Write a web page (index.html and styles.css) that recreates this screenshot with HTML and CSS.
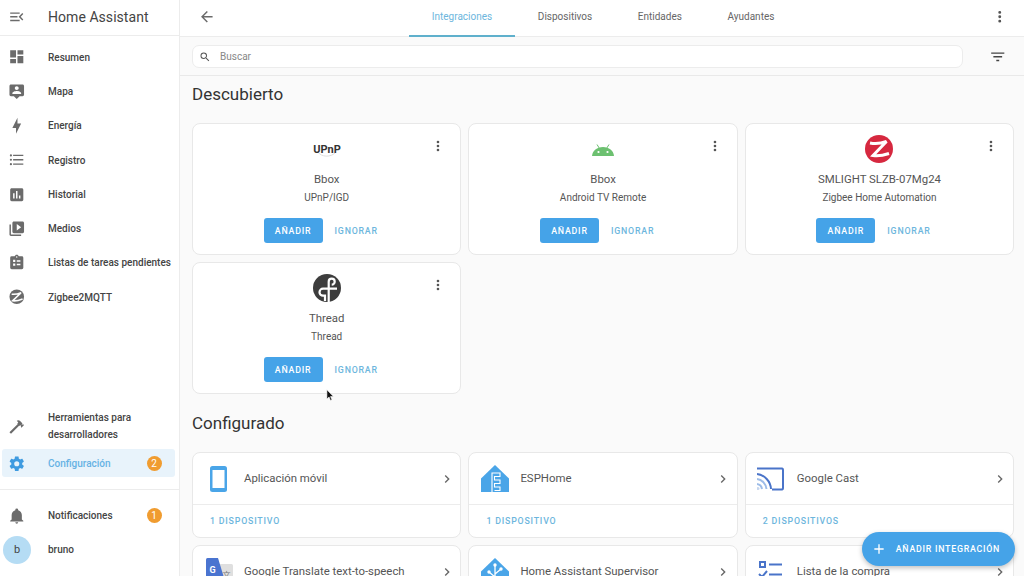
FILE: index.html
```html
<!DOCTYPE html>
<html>

<head>
    <meta charset="utf-8" />
    <meta name="viewport" content="width=device-width, initial-scale=1.0" />
    <title>Integraciones</title>
    <link rel="stylesheet" href="styles.css">
</head>

<body>
    <svg class="sprite" aria-hidden="true">
        <symbol id="i-dots" viewBox="0 0 24 24"><path d="M12,16A2,2 0 0,1 14,18A2,2 0 0,1 12,20A2,2 0 0,1 10,18A2,2 0 0,1 12,16M12,10A2,2 0 0,1 14,12A2,2 0 0,1 12,14A2,2 0 0,1 10,12A2,2 0 0,1 12,10M12,4A2,2 0 0,1 14,6A2,2 0 0,1 12,8A2,2 0 0,1 10,6A2,2 0 0,1 12,4Z"/></symbol>
        <symbol id="i-chevron" viewBox="0 0 24 24"><path d="M8.59,16.58L13.17,12L8.59,7.41L10,6L16,12L10,18L8.59,16.58Z"/></symbol>
    </svg>

    <div class="app">
        <aside class="sidebar">
            <div class="side-head">
                <svg class="icon" viewBox="0 0 24 24"><path d="M21,15.61L19.59,17L14.58,12L19.59,7L21,8.39L17.44,12L21,15.61M3,6H16V8H3V6M3,13V11H13V13H3M3,18V16H16V18H3Z"/></svg>
                <span class="side-title">Home Assistant</span>
            </div>
            <nav class="side-list">
                <a class="side-item"><svg class="icon" viewBox="0 0 24 24"><path d="M13,3V9H21V3M13,21H21V11H13M3,21H11V15H3M3,13H11V3H3V13Z"/></svg><span>Resumen</span></a>
                <a class="side-item"><svg class="icon" viewBox="0 0 24 24"><path d="M20 2H4C2.9 2 2 2.9 2 4V16C2 17.1 2.9 18 4 18H8L12 22L16 18H20C21.1 18 22 17.1 22 16V4C22 2.9 21.1 2 20 2M12 4.3C13.5 4.3 14.7 5.5 14.7 7S13.5 9.7 12 9.7 9.3 8.5 9.3 7 10.5 4.3 12 4.3M18 15H6V14.1C6 12.1 10 11 12 11S18 12.1 18 14.1V15Z"/></svg><span>Mapa</span></a>
                <a class="side-item"><svg class="icon" viewBox="0 0 24 24"><path d="M11 15H6L13 1V9H18L11 23V15Z"/></svg><span>Energía</span></a>
                <a class="side-item"><svg class="icon" viewBox="0 0 24 24"><path d="M7,5H21V7H7V5M7,13V11H21V13H7M4,4.5A1.5,1.5 0 0,1 5.5,6A1.5,1.5 0 0,1 4,7.5A1.5,1.5 0 0,1 2.5,6A1.5,1.5 0 0,1 4,4.5M4,10.5A1.5,1.5 0 0,1 5.5,12A1.5,1.5 0 0,1 4,13.5A1.5,1.5 0 0,1 2.5,12A1.5,1.5 0 0,1 4,10.5M7,19V17H21V19H7M4,16.5A1.5,1.5 0 0,1 5.5,18A1.5,1.5 0 0,1 4,19.5A1.5,1.5 0 0,1 2.5,18A1.5,1.5 0 0,1 4,16.5Z"/></svg><span>Registro</span></a>
                <a class="side-item"><svg class="icon" viewBox="0 0 24 24"><path d="M19 3H5C3.9 3 3 3.9 3 5V19C3 20.1 3.9 21 5 21H19C20.1 21 21 20.1 21 19V5C21 3.9 20.1 3 19 3M9 17H7V10H9V17M13 17H11V7H13V17M17 17H15V13H17V17Z"/></svg><span>Historial</span></a>
                <a class="side-item"><svg class="icon" viewBox="0 0 24 24"><path d="M4 6H2V20C2 21.1 2.9 22 4 22H18V20H4V6M20 2H8C6.9 2 6 2.9 6 4V16C6 17.1 6.9 18 8 18H20C21.1 18 22 17.1 22 16V4C22 2.9 21.1 2 20 2M12 14.5V5.5L18 10L12 14.5Z"/></svg><span>Medios</span></a>
                <a class="side-item"><svg class="icon" viewBox="0 0 24 24"><path fill-rule="evenodd" d="M19,3H14.82C14.4,1.84 13.3,1 12,1C10.7,1 9.6,1.84 9.18,3H5A2,2 0 0,0 3,5V19A2,2 0 0,0 5,21H19A2,2 0 0,0 21,19V5A2,2 0 0,0 19,3M12,3A1,1 0 0,1 13,4A1,1 0 0,1 12,5A1,1 0 0,1 11,4A1,1 0 0,1 12,3M7,8H10V11H7ZM12,8.5H17V10.5H12ZM7,13H10V16H7ZM12,13.5H17V15.5H12Z"/></svg><span>Listas de tareas pendientes</span></a>
                <a class="side-item"><svg class="icon" viewBox="0 0 24 24"><circle cx="12" cy="12" r="10"/><path class="zig-cut" d="M5 8.5C9 9 13 8.500 18 6.500L6.500 17.500C11 18 15 17 20 15"/></svg><span>Zigbee2MQTT</span></a>
            </nav>
            <div class="side-bottom">
                <a class="side-item side-item-tall"><svg class="icon" viewBox="0 0 24 24"><path d="M2 19.63L13.43 8.2L12.72 7.5L14.14 6.07L12 3.89C13.2 2.7 15.09 2.7 16.27 3.89L19.87 7.5L18.45 8.91H21.29L22 9.62L18.45 13.21L17.74 12.5V9.62L16.27 11.04L15.56 10.33L4.13 21.76L2 19.63Z"/></svg><span>Herramientas para desarrolladores</span></a>
                <a class="side-item side-item-active"><svg class="icon" viewBox="0 0 24 24"><path d="M12,15.5A3.5,3.5 0 0,1 8.5,12A3.5,3.5 0 0,1 12,8.5A3.5,3.5 0 0,1 15.5,12A3.5,3.5 0 0,1 12,15.5M19.43,12.97C19.47,12.65 19.5,12.33 19.5,12C19.5,11.67 19.47,11.34 19.43,11L21.54,9.37C21.73,9.22 21.78,8.95 21.66,8.73L19.66,5.27C19.54,5.05 19.27,4.96 19.05,5.05L16.56,6.05C16.04,5.66 15.5,5.32 14.87,5.07L14.5,2.42C14.46,2.18 14.25,2 14,2H10C9.75,2 9.54,2.18 9.5,2.42L9.13,5.07C8.5,5.32 7.96,5.66 7.44,6.05L4.95,5.05C4.73,4.96 4.46,5.05 4.34,5.27L2.34,8.73C2.21,8.95 2.27,9.22 2.46,9.37L4.57,11C4.53,11.34 4.5,11.67 4.5,12C4.5,12.33 4.53,12.65 4.57,12.97L2.46,14.63C2.27,14.78 2.21,15.05 2.34,15.27L4.34,18.73C4.46,18.95 4.73,19.03 4.95,18.95L7.44,17.94C7.96,18.34 8.5,18.68 9.13,18.93L9.5,21.58C9.54,21.82 9.75,22 10,22H14C14.25,22 14.46,21.82 14.5,21.58L14.87,18.93C15.5,18.67 16.04,18.34 16.56,17.94L19.05,18.95C19.27,19.03 19.54,18.95 19.66,18.73L21.66,15.27C21.78,15.05 21.73,14.78 21.54,14.63L19.43,12.97Z"/></svg><span>Configuración</span><b class="badge">2</b></a>
            </div>
            <div class="side-footer">
                <a class="side-item"><svg class="icon" viewBox="0 0 24 24"><path d="M21,19V20H3V19L5,17V11C5,7.9 7.03,5.17 10,4.29C10,4.19 10,4.1 10,4A2,2 0 0,1 12,2A2,2 0 0,1 14,4C14,4.1 14,4.19 14,4.29C16.97,5.17 19,7.9 19,11V17L21,19M14,21A2,2 0 0,1 12,23A2,2 0 0,1 10,21"/></svg><span>Notificaciones</span><b class="badge">1</b></a>
                <a class="side-item side-user"><i class="avatar">b</i><span>bruno</span></a>
            </div>
        </aside>

        <main class="main">
            <header class="topbar">
                <svg class="icon back" viewBox="0 0 24 24"><path d="M20,11V13H8L13.5,18.5L12.08,19.92L4.16,12L12.08,4.08L13.5,5.5L8,11H20Z"/></svg>
                <div class="tabs">
                    <a class="tab tab-active">Integraciones</a>
                    <a class="tab">Dispositivos</a>
                    <a class="tab">Entidades</a>
                    <a class="tab">Ayudantes</a>
                </div>
                <svg class="icon more"><use href="#i-dots"/></svg>
            </header>

            <div class="searchbar">
                <div class="search">
                    <svg class="search-icon" viewBox="0 0 24 24"><path d="M9.5,3A6.5,6.5 0 0,1 16,9.5C16,11.11 15.41,12.59 14.44,13.73L14.71,14H15.5L20.5,19L19,20.5L14,15.5V14.71L13.73,14.44C12.59,15.41 11.11,16 9.5,16A6.5,6.5 0 0,1 3,9.5A6.5,6.5 0 0,1 9.5,3M9.5,5C7,5 5,7 5,9.5C5,12 7,14 9.5,14C12,14 14,12 14,9.5C14,7 12,5 9.5,5Z"/></svg>
                    <span>Buscar</span>
                </div>
                <svg class="icon filter" viewBox="0 0 24 24"><path d="M6,13H18V11H6M3,6V8H21V6M10,18H14V16H10V18Z"/></svg>
            </div>

            <section class="content">
                <h2 class="section-title">Descubierto</h2>
                <div class="grid">
                    <div class="card disc">
                        <svg class="card-more"><use href="#i-dots"/></svg>
                        <div class="logo">
                            <svg class="logo-img" viewBox="0 0 28 28"><path fill="none" stroke="#d5d5d5" stroke-width="0.800" d="M5 17C8 22 18 23 23 17"/><text x="14" y="18" class="upnp">UPnP</text></svg>
                        </div>
                        <div class="disc-name">Bbox</div>
                        <div class="disc-sub">UPnP/IGD</div>
                        <div class="actions"><a class="btn">AÑADIR</a><a class="btn-text">IGNORAR</a></div>
                    </div>
                    <div class="card disc">
                        <svg class="card-more"><use href="#i-dots"/></svg>
                        <div class="logo">
                            <svg class="logo-img" viewBox="0 0 28 28"><path fill="#6cc070" d="M3 21C3.5 15.5 8 12 14 12S24.5 15.5 25 21Z"/><path stroke="#6cc070" stroke-width="1" d="M8 9.5L10.5 13.5M20 9.5L17.5 13.5"/><circle cx="9.5" cy="17" r="1.1" fill="#fff"/><circle cx="18.5" cy="17" r="1.1" fill="#fff"/></svg>
                        </div>
                        <div class="disc-name">Bbox</div>
                        <div class="disc-sub">Android TV Remote</div>
                        <div class="actions"><a class="btn">AÑADIR</a><a class="btn-text">IGNORAR</a></div>
                    </div>
                    <div class="card disc">
                        <svg class="card-more"><use href="#i-dots"/></svg>
                        <div class="logo">
                            <svg class="logo-img" viewBox="0 0 28 28"><circle cx="14" cy="14" r="14" fill="#d6283f"/><path fill="none" stroke="#fff" stroke-width="3" d="M5 8C10 9 16 8.500 21.500 6.500L8 20.500C13 21.500 18 20.500 24 18.500"/></svg>
                        </div>
                        <div class="disc-name">SMLIGHT SLZB-07Mg24</div>
                        <div class="disc-sub">Zigbee Home Automation</div>
                        <div class="actions"><a class="btn">AÑADIR</a><a class="btn-text">IGNORAR</a></div>
                    </div>
                    <div class="card disc">
                        <svg class="card-more"><use href="#i-dots"/></svg>
                        <div class="logo">
                            <svg class="logo-img" viewBox="0 0 28 28"><circle cx="14" cy="14" r="14" fill="#3d3d3d"/><path fill="none" stroke="#fff" stroke-width="2.200" d="M15.700 28V7.700A3 3 0 1 1 18.700 10.700"/><path fill="none" stroke="#fff" stroke-width="2.200" d="M24 14.700H10A3.500 3.500 0 0 0 10 21.700H12V27"/></svg>
                        </div>
                        <div class="disc-name">Thread</div>
                        <div class="disc-sub">Thread</div>
                        <div class="actions"><a class="btn">AÑADIR</a><a class="btn-text">IGNORAR</a></div>
                    </div>
                </div>

                <h2 class="section-title section-title-2">Configurado</h2>
                <div class="grid">
                    <div class="card conf">
                        <div class="conf-row">
                            <svg class="conf-logo" viewBox="0 0 30 30"><rect x="6" y="2" width="17" height="26" rx="2.5" fill="#4aa5e8"/><rect x="8.5" y="6" width="12" height="18" fill="#fff"/></svg>
                            <span>Aplicación móvil</span>
                            <svg class="chev"><use href="#i-chevron"/></svg>
                        </div>
                        <div class="conf-foot">1 DISPOSITIVO</div>
                    </div>
                    <div class="card conf">
                        <div class="conf-row">
                            <svg class="conf-logo" viewBox="0 0 30 30"><path fill="#4aa5e8" d="M15 1L29 14.5V28H1V14.5Z"/><path fill="none" stroke="#fff" stroke-width="1.1" d="M12 28V9H20V12.5H14.5V16H20V19.5H14.5V23H20V26.5H14.5"/></svg>
                            <span>ESPHome</span>
                            <svg class="chev"><use href="#i-chevron"/></svg>
                        </div>
                        <div class="conf-foot">1 DISPOSITIVO</div>
                    </div>
                    <div class="card conf">
                        <div class="conf-row">
                            <svg class="conf-logo" viewBox="2 0 30 30"><path fill="none" stroke="#4a74c9" stroke-width="2" d="M3 5.500V4.500H27A1.500 1.500 0 0 1 28 6V24A1.500 1.500 0 0 1 27 25.500H17"/><path fill="none" stroke="#4a74c9" stroke-width="2" d="M2 10A16 16 0 0 1 16 25"/><path fill="none" stroke="#9dbce8" stroke-width="2" d="M2 15A11 11 0 0 1 11.500 25M2 20A6 6 0 0 1 7 25"/><circle cx="3" cy="24.500" r="1.500" fill="#c6d6ef"/></svg>
                            <span>Google Cast</span>
                            <svg class="chev"><use href="#i-chevron"/></svg>
                        </div>
                        <div class="conf-foot">2 DISPOSITIVOS</div>
                    </div>
                    <div class="card conf">
                        <div class="conf-row">
                            <svg class="conf-logo" viewBox="0 0 30 30"><rect x="12" y="7" width="17" height="22" rx="1.500" fill="#dfdfdf"/><path fill="#4a74d0" d="M2 2.500A1.500 1.500 0 0 1 3.500 1H14L21 24H3.500A1.500 1.500 0 0 1 2 22.500Z"/><text x="5.500" y="16" class="g-mark">G</text><text x="18.500" y="21" class="g-mark g-mark-dark">文</text></svg>
                            <span>Google Translate text-to-speech</span>
                            <svg class="chev"><use href="#i-chevron"/></svg>
                        </div>
                    </div>
                    <div class="card conf">
                        <div class="conf-row">
                            <svg class="conf-logo" viewBox="0 0 30 30"><path fill="#4aa5e8" d="M15 1L29 14.5V28H1V14.5Z"/><path fill="none" stroke="#fff" stroke-width="1.300" d="M15 28V8M15 20L9 15M15 17L21 12"/><circle cx="15" cy="8" r="1.700" fill="#fff"/><circle cx="9" cy="15" r="1.700" fill="#fff"/><circle cx="21" cy="12" r="1.700" fill="#fff"/></svg>
                            <span>Home Assistant Supervisor</span>
                            <svg class="chev"><use href="#i-chevron"/></svg>
                        </div>
                    </div>
                    <div class="card conf">
                        <div class="conf-row">
                            <svg class="conf-logo" viewBox="2 0 30 30"><path fill="none" stroke="#4a74c9" stroke-width="2" d="M5 5H10V10H5ZM14 7.500H27M14 17.500H27M4 17L7 20L12 14"/></svg>
                            <span>Lista de la compra</span>
                            <svg class="chev"><use href="#i-chevron"/></svg>
                        </div>
                    </div>
                </div>
            </section>

            <a class="fab">
                <svg viewBox="0 0 24 24"><path d="M19,13H13V19H11V13H5V11H11V5H13V11H19V13Z"/></svg>
                <span>AÑADIR INTEGRACIÓN</span>
            </a>
        </main>
    </div>

    <svg class="cursor" viewBox="0 0 12 18"><path fill="#111" stroke="#fff" stroke-width="0.8" d="M1 1V14L4 11L6 16L8 15L6 10.500H10Z"/></svg>
</body>

</html>
```

FILE: styles.css
```css
/* Общие стили */
html,
body {
    margin: 0;
    height: 100%;
    overflow: hidden;
}

body {
    font-family: 'Roboto', 'Liberation Sans', sans-serif;
    background-color: #fafafa;
    color: #444;
}

.sprite {
    display: none;
}

.app {
    display: flex;
    width: 1024px;
    height: 576px;
}

.icon {
    width: 17.500px;
    height: 17.500px;
    flex: none;
    fill: #6b6b6b;
}

/* Боковая панель */
.sidebar {
    width: 179px;
    flex: none;
    display: flex;
    flex-direction: column;
    background-color: #fff;
    border-right: 1px solid #ececec;
}

.side-head {
    height: 36px;
    box-sizing: border-box;
    display: flex;
    align-items: center;
    gap: 22.500px;
    padding: 0 0 2px 8px;
    border-bottom: 1px solid #ececec;
}

.side-title {
    font-size: 14px;
    color: #444;
    letter-spacing: 0.05px;
}

.side-list {
    display: flex;
    flex-direction: column;
    padding-top: 4px;
}

.side-item {
    height: 34.300px;
    display: flex;
    align-items: center;
    gap: 22.500px;
    padding: 0 17.500px 0 8px;
    font-size: 10px;
    font-weight: 500;
    color: #444;
    white-space: nowrap;
}

.side-item span {
    flex: 1;
}

.side-bottom {
    margin-top: auto;
    padding-bottom: 12px;
    border-bottom: 1px solid #ececec;
}

.side-item-tall {
    height: 38px;
    line-height: 17px;
    margin-bottom: 4px;
    white-space: normal;
}

.side-item-active {
    height: 28px;
    margin: 0 4px 0 2px;
    padding: 0 13.500px 0 6px;
    border-radius: 3px;
    background-color: #e8f3fb;
    color: #66b2e4;
}

.side-item-active .icon {
    fill: #3f9be0;
}

.zig-cut {
    fill: none;
    stroke: #fff;
    stroke-width: 2.200;
}

.badge {
    width: 15px;
    height: 15px;
    flex: none;
    border-radius: 50%;
    background-color: #f09c30;
    color: #fff;
    font-size: 10px;
    font-weight: 400;
    line-height: 15px;
    text-align: center;
}

.side-footer {
    padding: 8px 0 9px;
}

.side-user {
    padding-left: 3px;
    gap: 17px;
}

.avatar {
    width: 28px;
    height: 28px;
    flex: none;
    border-radius: 50%;
    background-color: #b5dcf4;
    color: #444;
    font-style: normal;
    font-size: 11px;
    font-weight: 400;
    line-height: 28px;
    text-align: center;
}

/* Основная часть */
.main {
    flex: 1;
    min-width: 0;
    position: relative;
    display: flex;
    flex-direction: column;
}

.topbar {
    height: 37px;
    flex: none;
    box-sizing: border-box;
    display: flex;
    align-items: center;
    padding: 0 16px 2px 18px;
    background-color: #fff;
    border-bottom: 1px solid #ececec;
}

.tabs {
    display: flex;
    margin-left: 193.500px;
    align-self: stretch;
}

.tab {
    display: flex;
    align-items: center;
    padding: 0 22.800px 4px;
    font-size: 10px;
    color: #666;
    box-sizing: border-box;
    height: 37px;
}

.tab-active {
    color: #6db6dd;
    border-bottom: 2px solid #5fb0cc;
    padding-bottom: 2px;
}

.more {
    margin-left: auto;
    fill: #555;
}

.searchbar {
    height: 39px;
    flex: none;
    box-sizing: border-box;
    display: flex;
    align-items: center;
    padding: 1px 18px 0 12px;
    border-bottom: 1px solid #e9e9e9;
    background-color: #fafafa;
}

.search {
    width: 771px;
    height: 23px;
    box-sizing: border-box;
    display: flex;
    align-items: center;
    gap: 9px;
    padding-left: 6px;
    background-color: #fff;
    border: 1px solid #ececec;
    border-radius: 7px;
    font-size: 10px;
    color: #888;
}

.search-icon {
    width: 12px;
    height: 12px;
    fill: #555;
}

.filter {
    margin-left: auto;
    fill: #444;
}

.content {
    padding: 0 10px 0 12px;
}

.section-title {
    margin: 0;
    height: 47px;
    padding-top: 8px;
    box-sizing: border-box;
    font-size: 17px;
    font-weight: 400;
    line-height: 20px;
    color: #333;
}

.section-title-2 {
    height: 58px;
    padding-top: 19px;
}

.grid {
    display: grid;
    grid-template-columns: repeat(3, 269.400px);
    gap: 7px;
}

.card {
    position: relative;
    box-sizing: border-box;
    background-color: #fff;
    border: 1px solid #e8e8e8;
    border-radius: 8px;
}

/* Найденные интеграции */
.disc {
    height: 132px;
    display: flex;
    flex-direction: column;
    align-items: center;
    padding-top: 11px;
}

.card-more {
    position: absolute;
    top: 14px;
    right: 14px;
    width: 16px;
    height: 16px;
    fill: #555;
}

.logo {
    height: 28px;
    display: flex;
    align-items: center;
    justify-content: center;
}

.logo-img {
    width: 28px;
    height: 28px;
}

.upnp {
    font-size: 11px;
    font-weight: 700;
    fill: #333;
    text-anchor: middle;
}

.disc-name {
    margin-top: 9px;
    font-size: 11.400px;
    line-height: 15px;
    color: #555;
}

.disc-sub {
    margin-top: 4px;
    font-size: 10px;
    line-height: 14px;
    color: #555;
}

.actions {
    display: flex;
    align-items: center;
    gap: 12px;
    margin: 13px 12px 0 0;
}

.btn {
    width: 59px;
    height: 25px;
    display: flex;
    align-items: center;
    justify-content: center;
    border-radius: 3px;
    background-color: #45a3e8;
    color: #fff;
    font-size: 8.800px;
    font-weight: 500;
    letter-spacing: 0.8px;
}

.btn-text {
    font-size: 8.800px;
    font-weight: 500;
    letter-spacing: 0.8px;
    color: #6db6dd;
}

/* Настроенные интеграции */
.conf-row {
    height: 51px;
    display: flex;
    align-items: center;
    gap: 10px;
    padding: 0 5.500px 0 14px;
    font-size: 11.400px;
    color: #555;
}

.conf-row span {
    flex: 1;
    margin-bottom: 2px;
}

.conf-logo {
    width: 30px;
    height: 30px;
    flex: none;
    margin-left: -3px;
}

.g-mark {
    font-size: 9px;
    font-weight: 700;
    fill: #fff;
}

.g-mark-dark {
    font-size: 8px;
    font-weight: 400;
    fill: #777;
    font-family: 'Noto Sans CJK SC', sans-serif;
}

.chev {
    width: 16px;
    height: 16px;
    flex: none;
    fill: #666;
}

.conf-foot {
    height: 32px;
    display: flex;
    align-items: center;
    padding-left: 17px;
    border-top: 1px solid #ececec;
    font-size: 8.800px;
    font-weight: 500;
    letter-spacing: 0.8px;
    color: #6db6dd;
}

/* Плавающая кнопка и курсор лежат поверх контента */
.fab {
    position: absolute;
    right: 9px;
    top: 532px;
    height: 34px;
    display: flex;
    align-items: center;
    gap: 9px;
    padding: 0 15px 0 9px;
    border-radius: 17px;
    background-color: #45a3e8;
    box-shadow: 0 2px 5px rgba(0, 0, 0, 0.25);
    color: #fff;
    font-size: 8.800px;
    font-weight: 500;
    letter-spacing: 0.75px;
}

.fab svg {
    width: 16px;
    height: 16px;
    fill: #fff;
}

.cursor {
    position: absolute;
    left: 326px;
    top: 389px;
    width: 9px;
    height: 13px;
}
```
